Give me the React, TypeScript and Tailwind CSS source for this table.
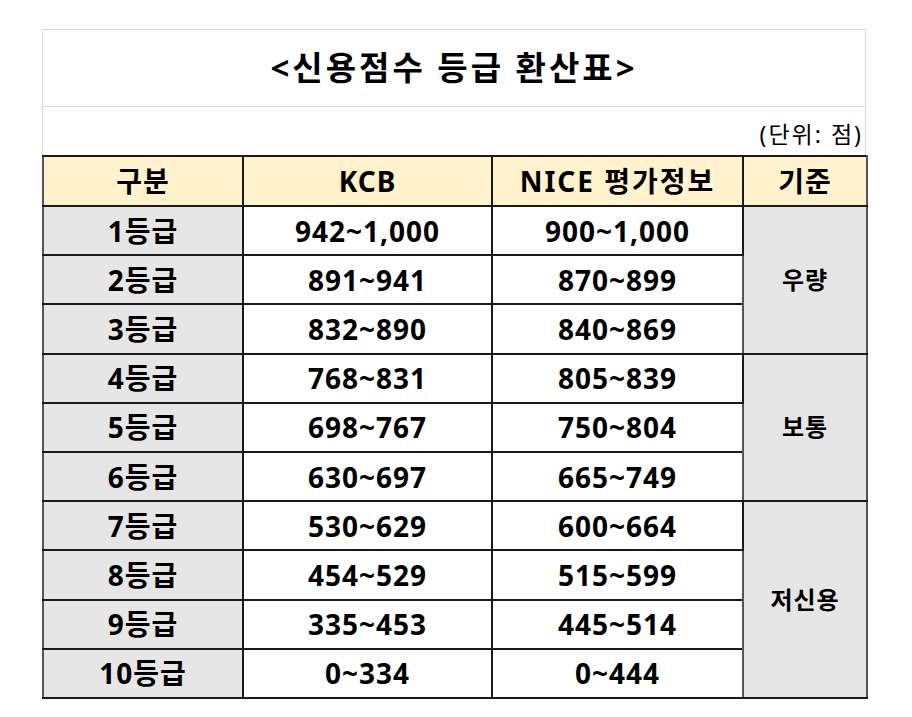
import React from "react";

const rows = [
  ["1등급", "942~1,000", "900~1,000"],
  ["2등급", "891~941", "870~899"],
  ["3등급", "832~890", "840~869"],
  ["4등급", "768~831", "805~839"],
  ["5등급", "698~767", "750~804"],
  ["6등급", "630~697", "665~749"],
  ["7등급", "530~629", "600~664"],
  ["8등급", "454~529", "515~599"],
  ["9등급", "335~453", "445~514"],
  ["10등급", "0~334", "0~444"],
];

const groups: Record<number, [string, number]> = {
  0: ["우량", 3],
  3: ["보통", 3],
  6: ["저신용", 4],
};

export default function App() {
  const font = { fontFamily: '"Noto Sans", "Noto Sans CJK KR", sans-serif' };
  return (
    <div className="w-[912px] h-[717px] bg-white text-black" style={font}>
      <div className="pt-[29px] pl-[42px]">
        <div className="w-[824px]">
          <div className="h-[77px] border-t border-l border-r border-[#d9d9d9] flex items-center justify-center text-[33px] font-bold tracking-[3px]">
            &lt;신용점수 등급 환산표&gt;
          </div>
          <div className="h-[49px] border-t border-l border-r border-[#d9d9d9] flex items-end justify-end pr-[2px] pb-[9px] text-[23px] leading-none tracking-[2px]">
            (단위: 점)
          </div>
          <table className="border-collapse table-fixed w-[824px] font-bold text-[28px] tracking-[1px]">
            <colgroup>
              <col className="w-[200px]" />
              <col className="w-[249px]" />
              <col className="w-[251px]" />
              <col className="w-[124px]" />
            </colgroup>
            <thead>
              <tr className="h-[50px] bg-[#fff2cc]">
                <th className="border-2 border-[#1a1a1a] border-l-[#555] font-bold">구분</th>
                <th className="border-2 border-[#1a1a1a] font-bold">KCB</th>
                <th className="border-2 border-[#1a1a1a] font-bold tracking-[2px]">NICE 평가정보</th>
                <th className="border-2 border-[#1a1a1a] border-r-[#555] font-bold">기준</th>
              </tr>
            </thead>
            <tbody>
              {rows.map((r, i) => (
                <tr key={i} className="h-[49.2px]">
                  <td className="border-2 border-[#1a1a1a] border-l-[#555] bg-[#e7e6e6] text-center">{r[0]}</td>
                  <td className="border-2 border-[#1a1a1a] text-center">{r[1]}</td>
                  <td className="border-2 border-[#1a1a1a] text-center">{r[2]}</td>
                  {groups[i] ? (
                    <td
                      rowSpan={groups[i][1]}
                      className="border-2 border-[#1a1a1a] border-l-[#555] border-r-[#555] bg-[#e7e6e6] text-center text-[24px]"
                    >
                      {groups[i][0]}
                    </td>
                  ) : null}
                </tr>
              ))}
            </tbody>
          </table>
        </div>
      </div>
    </div>
  );
}
